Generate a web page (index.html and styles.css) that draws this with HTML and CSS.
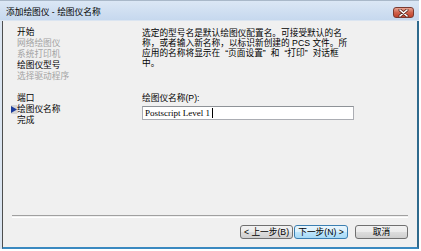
FILE: index.html
```html
<!DOCTYPE html>
<html lang="zh-CN">
<head>
  <meta charset="UTF-8">
  <title>添加绘图仪 - 绘图仪名称</title>
  <link rel="stylesheet" href="styles.css">
</head>
<body>
  <div class="window">
    <div class="titlebar">
      <span class="title">添加绘图仪 - 绘图仪名称</span>
      <span class="close">
        <svg width="11" height="8" viewBox="0 0 11 8">
          <path d="M2 1 L9 7 M9 1 L2 7" stroke="#5a2a22" stroke-width="3" stroke-linecap="round"/>
          <path d="M2 1 L9 7 M9 1 L2 7" stroke="#ffffff" stroke-width="1.6" stroke-linecap="round"/>
        </svg>
      </span>
    </div>
    <div class="client">
      <div class="main">
        <ul class="steps">
          <li>开始</li>
          <li class="off">网络绘图仪</li>
          <li class="off">系统打印机</li>
          <li>绘图仪型号</li>
          <li class="off">选择驱动程序</li>
          <li class="blank"></li>
          <li>端口</li>
          <li class="current">
            <span class="marker">
              <svg width="6" height="7" viewBox="0 0 6 7"><path d="M0 0 L6 3.5 L0 7 Z" fill="#1d3d9c"/></svg>
            </span>绘图仪名称
          </li>
          <li>完成</li>
        </ul>
        <div class="page">
          <p class="intro">选定的型号名是默认绘图仪配置名。可接受默认的名<br>称，或者输入新名称，以标识新创建的 PCS 文件。所<br>应用的名称将显示在<span class="q-open">“</span>页面设置<span class="q-close">”</span>和<span class="q-open">“</span>打印<span class="q-close">”</span>对话框<br>中。</p>
          <label class="field-label" for="plotterName">绘图仪名称(P):</label>
          <div class="field" id="plotterName">Postscript Level 1<span class="caret"></span></div>
        </div>
      </div>
      <div class="separator"></div>
      <div class="buttons">
        <button class="btn">&lt; 上一步(B)</button>
        <button class="btn default">下一步(N) &gt;</button>
        <button class="btn cancel">取消</button>
      </div>
    </div>
  </div>
</body>
</html>
```

FILE: styles.css
```css
body {
  margin: 0;
  background: #ffffff;
  font-family: "Liberation Sans", "Noto Sans CJK SC", sans-serif;
  font-size: 8.7px;
  color: #000000;
}

.window {
  width: 419px;
  height: 249px;
  display: flex;
  flex-direction: column;
  background: #dbe5f1;
}

.titlebar {
  height: 20px;
  flex: none;
  display: flex;
  align-items: center;
  justify-content: space-between;
  padding: 0 5px 0 6px;
  background: linear-gradient(#dbe7f5, #c6d8ee);
  border-top: 1px solid #a9b8c9;
  box-sizing: border-box;
}

.title {
  line-height: 10px;
  padding-top: 3px;
}

.close {
  width: 21px;
  height: 11px;
  margin-top: 4px;
  display: flex;
  align-items: center;
  justify-content: center;
  border: 1px solid #7a3a30;
  border-radius: 3px;
  box-sizing: border-box;
  background: linear-gradient(#e8a493, #d0624c 50%, #c2432c);
}

.close svg {
  display: block;
}

.client {
  flex: 1;
  display: flex;
  flex-direction: column;
  margin-left: 2px;
  margin-top: 1px;
  background: #f0f0f0;
  border-left: 1px solid #4e4e4e;
  border-right: 2px solid #2f6a8d;
  border-bottom: 2px solid #3a89c0;
}

.main {
  height: 194px;
  display: flex;
}

.steps {
  width: 125px;
  margin: 0;
  padding: 6px 0 0 14px;
  list-style: none;
  line-height: 11px;
}

.steps li {
  position: relative;
  height: 11px;
  white-space: nowrap;
}

.steps .off {
  color: #a3a3a3;
}

.marker {
  position: absolute;
  left: -6px;
  top: 1px;
  width: 6px;
  height: 9px;
  display: flex;
  align-items: center;
  background: #d4d4d4;
}

.page {
  padding-top: 7px;
}

.intro {
  margin: 0;
  line-height: 10px;
  white-space: nowrap;
}

/* full-width quote cells, as in the system font */
.q-open {
  padding-left: 5px;
}

.q-close {
  padding-right: 5px;
}

.field-label {
  display: block;
  margin-top: 25px;
  line-height: 10px;
}

.field {
  width: 212px;
  height: 14px;
  margin-top: 3px;
  padding-left: 2px;
  box-sizing: border-box;
  background: #ffffff;
  border: 1px solid #abadb3;
  border-top-color: #8e9297;
  font-family: "Liberation Serif", serif;
  font-size: 9px;
  line-height: 12px;
  display: flex;
  align-items: center;
}

.caret {
  display: inline-block;
  width: 1px;
  height: 10px;
  margin-left: 2px;
  background: #000000;
}

.separator {
  margin: 0 9px;
  height: 1px;
  border-top: 1px solid #a0a0a0;
  border-bottom: 1px solid #ffffff;
}

.buttons {
  display: flex;
  justify-content: flex-end;
  padding: 7px 9px 0 0;
}

.btn {
  width: 53px;
  height: 14px;
  padding: 0;
  margin: 0;
  font-family: inherit;
  font-size: 8.7px;
  line-height: 12px;
  color: #000000;
  border: 1px solid #707070;
  border-radius: 3px;
  background: linear-gradient(#f2f2f2, #ebebeb 50%, #dddddd 51%, #cfcfcf);
}

.btn.default {
  width: 54px;
  margin-left: 1px;
  border-color: #3c7fb1;
  background: linear-gradient(#eaf6fd, #d9f0fc 50%, #bee6fd 51%, #a7d9f5);
}

.btn.cancel {
  margin-left: 7px;
}
```
